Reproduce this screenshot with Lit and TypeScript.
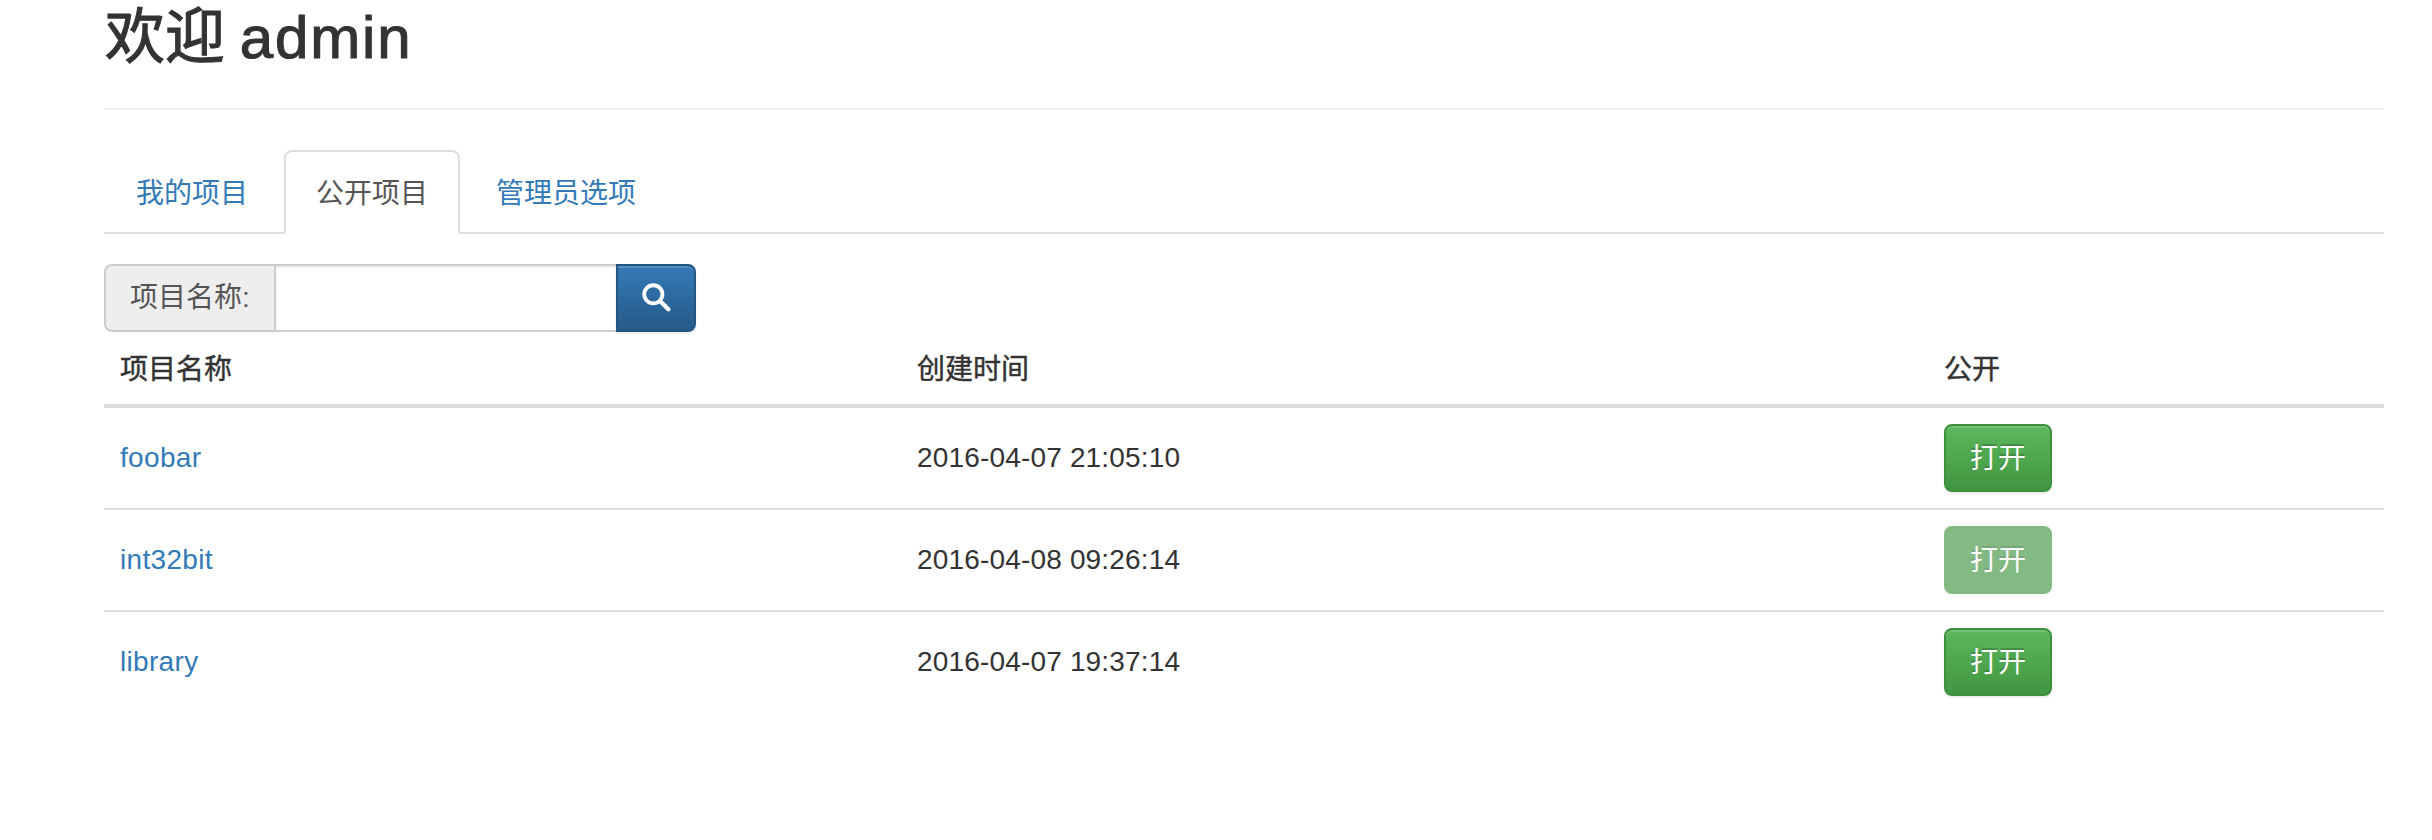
import { LitElement, html, css } from "lit";
import { customElement } from "lit/decorators.js";

const rows = [
  { name: "foobar", time: "2016-04-07 21:05:10", off: false },
  { name: "int32bit", time: "2016-04-08 09:26:14", off: true },
  { name: "library", time: "2016-04-07 19:37:14", off: false },
];

@customElement("app-root")
export class AppRoot extends LitElement {
  static styles = css`
    :host {
      display: block;
      box-sizing: border-box;
      width: 2432px;
      height: 840px;
      padding: 0 48px 0 104px;
      background: #fff;
      color: #333;
      overflow: hidden;
      font: 28px/40px "Liberation Sans", "Noto Sans CJK SC", sans-serif;
    }
    * { box-sizing: border-box; }
    a { color: #337ab7; text-decoration: none; }
    .header {
      padding: 5px 0 37px;
      border-bottom: 2px solid #eee;
      margin-bottom: 40px;
    }
    h2 {
      margin: 0 0 0 1px;
      font-size: 60px;
      line-height: 66px;
      font-weight: 400;
      -webkit-text-stroke: 1.1px #333;
    }
    .latin { letter-spacing: 1.9px; margin-left: -2px; }
    .tabs {
      display: flex;
      list-style: none;
      margin: 0 0 30px;
      padding: 0;
      height: 84px;
      border-bottom: 2px solid #ddd;
    }
    .tab {
      padding: 22px 30px 18px;
      margin-right: 4px;
      height: 84px;
      border: 2px solid transparent;
      border-radius: 8px 8px 0 0;
    }
    .tab.active {
      background: #fff;
      color: #555;
      border-color: #ddd #ddd #fff;
    }
    .search { display: flex; height: 68px; width: 592px; }
    .addon {
      display: flex;
      align-items: center;
      width: 172px;
      padding: 0 24px;
      background: #eee;
      color: #555;
      border: 2px solid #ccc;
      border-radius: 8px 0 0 8px;
      white-space: nowrap;
    }
    input {
      flex: 1;
      min-width: 0;
      height: 68px;
      border: 2px solid #ccc;
      border-left: 0;
      border-right: 0;
      outline: none;
      padding: 0 24px;
      background: #fff;
      box-shadow: inset 0 2px 2px rgba(0, 0, 0, 0.075);
    }
    .go {
      display: flex;
      align-items: center;
      justify-content: center;
      width: 80px;
      padding: 0;
      border: 2px solid #245580;
      border-radius: 0 8px 8px 0;
      background: linear-gradient(#337ab7, #265a88);
      box-shadow: inset 0 2px 0 rgba(255, 255, 255, 0.15), 0 2px 2px rgba(0, 0, 0, 0.075);
    }
    .go svg { display: block; width: 30px; height: 30px; margin-top: -2px; }
    table {
      width: 100%;
      table-layout: fixed;
      border-collapse: separate;
      border-spacing: 0;
    }
    .c1 { width: 797px; }
    .c2 { width: 1027px; }
    th, td {
      padding: 16px;
      text-align: left;
      vertical-align: middle;
    }
    th {
      padding-top: 18px;
      padding-bottom: 14px;
      border-bottom: 4px solid #ddd;
      font-weight: 400;
      -webkit-text-stroke: 0.45px #333;
    }
    td { border-bottom: 2px solid #ddd; }
    td a { letter-spacing: 0.32px; }
    .time { letter-spacing: 0.17px; }
    tr:last-child td { border-bottom: 0; }
    .btn {
      display: block;
      width: 108px;
      height: 68px;
      padding: 2px 0 0;
      font: inherit;
      color: #fff;
      border: 2px solid #3e8f3e;
      border-radius: 8px;
      background: linear-gradient(#5cb85c, #419641);
      box-shadow: inset 0 2px 0 rgba(255, 255, 255, 0.15), 0 2px 2px rgba(0, 0, 0, 0.075);
      text-shadow: 0 -2px 0 rgba(0, 0, 0, 0.2);
    }
    .btn.off {
      background: #419641;
      border-color: #419641;
      box-shadow: none;
      opacity: 0.65;
    }
  `;

  render() {
    return html`
      <div class="header"><h2>欢迎 <span class="latin">admin</span></h2></div>
      <ul class="tabs">
        <li class="tab"><a href="#">我的项目</a></li>
        <li class="tab active">公开项目</li>
        <li class="tab"><a href="#">管理员选项</a></li>
      </ul>
      <div class="search">
        <span class="addon">项目名称:</span>
        <input type="text" />
        <button class="go" aria-label="搜索">
          <svg viewBox="0 0 28 28" fill="none" stroke="#fff" stroke-linecap="round">
            <circle cx="11.5" cy="11.5" r="8.5" stroke-width="3.6"></circle>
            <path d="M18 18l7.5 7.5" stroke-width="4"></path>
          </svg>
        </button>
      </div>
      <table>
        <thead>
          <tr>
            <th class="c1">项目名称</th>
            <th class="c2">创建时间</th>
            <th>公开</th>
          </tr>
        </thead>
        <tbody>
          ${rows.map(
            (r) => html`
              <tr>
                <td><a href="#">${r.name}</a></td>
                <td class="time">${r.time}</td>
                <td><button class="btn ${r.off ? "off" : ""}">打开</button></td>
              </tr>
            `
          )}
        </tbody>
      </table>
    `;
  }
}
